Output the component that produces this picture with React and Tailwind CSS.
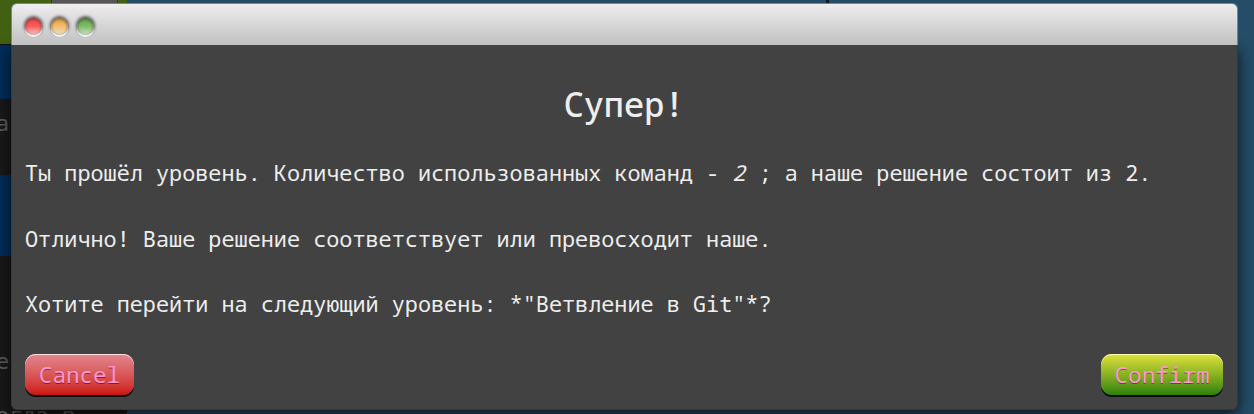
const mono = "font-['Noto_Sans_Mono','DejaVu_Sans_Mono',monospace]";

function Light({ color }) {
  return (
    <span
      className={`h-[17px] w-[17px] rounded-full shadow-[0_2px_0_#f4f4f4,0_-1px_3px_1px_rgba(50,50,50,0.75),inset_0_1px_3px_rgba(70,45,35,0.7)] ${color}`}
    />
  );
}

function Backdrop() {
  return (
    <div className="flex h-full w-full bg-[#254d68]">
      <div className={`${mono} flex w-[127px] flex-col bg-[#191919] text-[22px] leading-[26px] text-[#606060]`}>
        <div className="h-[44px] bg-[#416014]">
          <div className="ml-[51px] h-[4px] w-[67px] border-x border-[#333333] bg-[#555555]" />
        </div>
        <div className="h-[55px] border-t border-[#111111] bg-[#002d5a]" />
        <div className="h-[76px] pt-[10px]"><span className="-ml-[4px]">а</span></div>
        <div className="h-[81px] bg-[#002d5a]" />
        <div className="pt-[91px]"><span className="-ml-[4px]">е</span></div>
        <div className="h-[41px] overflow-hidden pt-[28px] whitespace-pre"><span className="-ml-[4px]">огда в</span></div>
      </div>
      <div className="ml-[699px] h-[4px] w-[3px] bg-[#151820]" />
    </div>
  );
}

export default function App() {
  return (
    <div className="relative h-[414px] w-[1254px] overflow-hidden">
      <Backdrop />
      <div className={`${mono} absolute top-[3px] left-[11px] flex h-[407px] w-[1227px] flex-col text-[21.83px] text-[#eeeeee]`}>
        <div className="z-10 flex h-[42px] shrink-0 gap-[9px] rounded-t-[6px] border-x border-t border-[#668ba5] bg-linear-to-b from-[#efedee] to-[#c1c1c1] pt-[14px] pl-[13px]">
          <Light color="bg-linear-to-b from-[#ed4545] via-[#fa5c5c] to-[#e8c8c8]" />
          <Light color="bg-linear-to-b from-[#dda04e] via-[#f6bd6c] to-[#e9dfcd]" />
          <Light color="bg-linear-to-b from-[#5ca24b] via-[#7fbd68] to-[#d0e0ca]" />
        </div>
        <div className="flex grow flex-col rounded-b-[6px] border-x border-b border-[#383838] bg-[#424242] pr-[14px] pl-[13px] shadow-[0_5px_15px_rgba(0,0,0,0.75)]">
          <h2 className="mt-[36px] h-[46px] text-center text-[33.6px] leading-[46px] font-medium">Супер!</h2>
          <p className="mt-[31px] h-[30px] leading-[30px] whitespace-pre">Ты прошёл уровень. Количество использованных команд - <em>2</em> ; а наше решение состоит из 2.</p>
          <p className="mt-[36px] h-[30px] leading-[30px] whitespace-pre">Отлично! Ваше решение соответствует или превосходит наше.</p>
          <p className="mt-[35px] h-[30px] leading-[30px] whitespace-pre">Хотите перейти на следующий уровень: *"Ветвление в Git"*?</p>
          <div className="mt-[35px] flex justify-between text-[22.6px] leading-[41px] text-[#ff96d2]">
            <button className="h-[41px] w-[109px] rounded-[11px] bg-linear-to-b from-[#e28590] to-[#cc0e0e] text-center shadow-[0_2px_0_#080808,inset_0_1px_0_rgba(255,235,235,0.9)] [text-shadow:0_1px_0_rgba(60,0,0,0.55)]">Cancel</button>
            <button className="h-[41px] w-[122px] rounded-[11px] bg-linear-to-b from-[#dfe33b] to-[#28820c] text-center shadow-[0_2px_0_#080808,inset_0_1px_0_rgba(255,255,190,0.9)] [text-shadow:0_1px_0_rgba(50,50,0,0.6)]">Confirm</button>
          </div>
        </div>
      </div>
    </div>
  );
}
